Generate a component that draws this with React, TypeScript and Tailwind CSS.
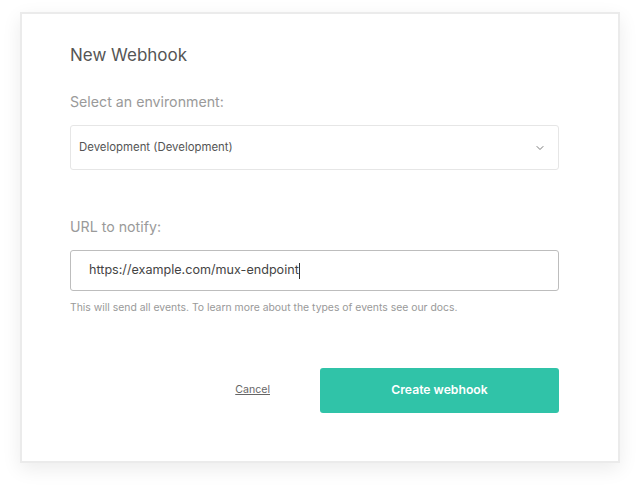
import { ChevronDown } from "lucide-react";

const App = () => {
  return (
    <div
      className="w-[640px] h-[492px] bg-white pt-[12px] pl-[20px]"
      style={{ fontFamily: "Inter, 'Liberation Sans', sans-serif" }}
    >
      <div className="w-[600px] h-[451px] bg-white border-2 border-[#ebebeb] shadow-[0_6px_18px_rgba(0,0,0,0.08)] pl-[48px] pt-[29px]">
        <h1 className="text-[17px] leading-[24px] text-[#555] font-normal">New Webhook</h1>

        <p className="mt-[25px] text-[14.2px] leading-[20px] text-[#9a9a9a]">Select an environment:</p>
        <div className="mt-[13px] w-[489px] h-[45px] border border-[#e6e6e6] rounded-[3px] flex items-center justify-between pl-[8px] pr-[12px]">
          <span className="text-[11.4px] text-[#555]">Development (Development)</span>
          <ChevronDown className="w-3 h-3 text-[#666]" strokeWidth={1.75} />
        </div>

        <p className="mt-[47px] text-[14.2px] leading-[20px] text-[#9a9a9a]">URL to notify:</p>
        <div className="mt-[13px] w-[489px] h-[41px] border border-[#bdbdbd] rounded-[3px] flex items-center pl-[18px]">
          <span className="text-[12.6px] text-[#444]">https://example.com/mux-endpoint</span>
          <span className="w-px h-[16px] bg-[#333]" />
        </div>
        <p className="mt-[9px] text-[10.4px] text-[#999]">
          This will send all events. To learn more about the types of events see our docs.
        </p>

        <div className="mt-[52px] w-[489px] flex items-center justify-end">
          <a className="text-[10.6px] text-[#666] underline mr-[50px]">Cancel</a>
          <button className="w-[239px] h-[45px] rounded-[3px] bg-[#30c3a8] text-white text-[12.2px] font-semibold">
            Create webhook
          </button>
        </div>
      </div>
    </div>
  );
};

export default App;
